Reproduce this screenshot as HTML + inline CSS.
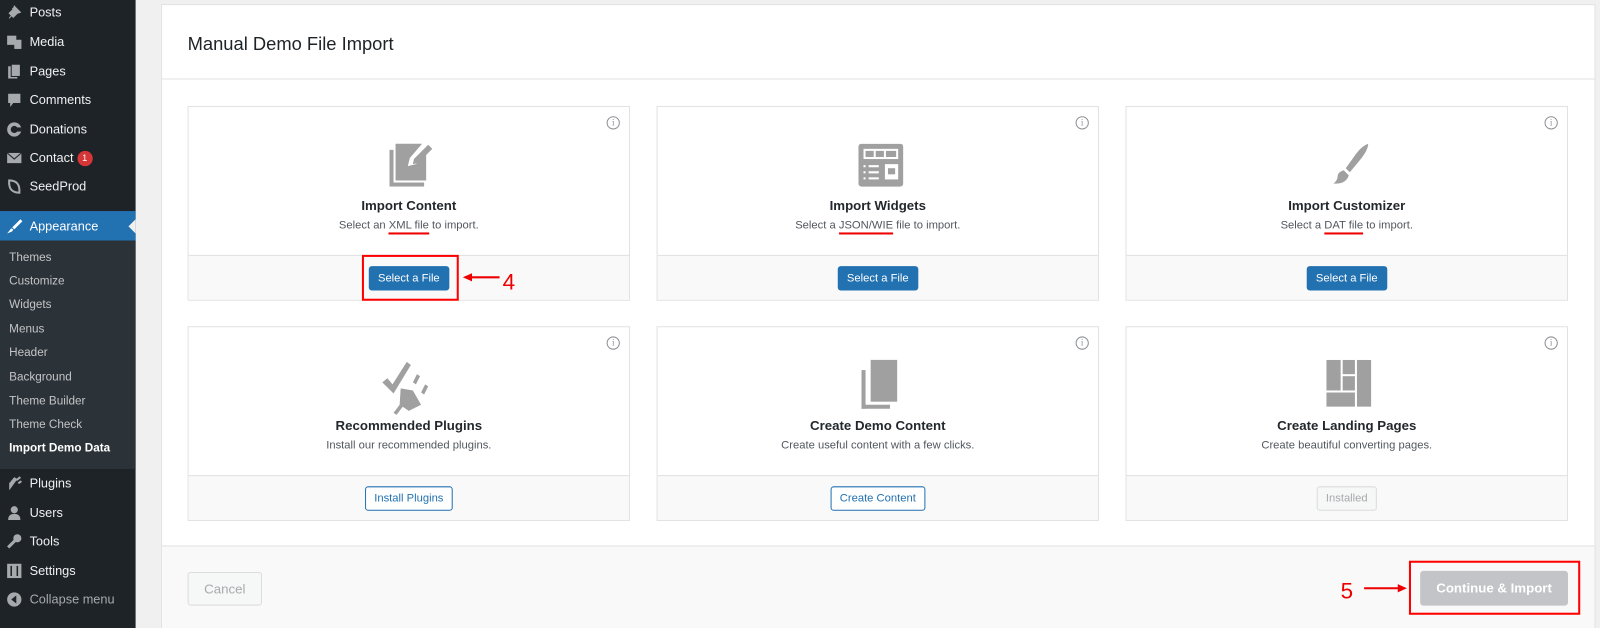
<!DOCTYPE html>
<html><head><meta charset="utf-8"><style>
*{box-sizing:border-box;margin:0;padding:0}
html,body{width:1600px;height:628px;overflow:hidden;background:#f0f0f1;font-family:"Liberation Sans",sans-serif}
#w{position:absolute;left:0;top:0;width:1570px;height:616px;transform:scale(1.0195);transform-origin:0 0}
.sb{position:absolute;left:0;top:0;width:133px;height:616px;background:#1d2327}
.mi{position:absolute;left:0;width:133px;height:28px;color:#f0f0f1;font-size:12.5px;line-height:28px;padding-left:29px}
.mi svg{position:absolute;left:6px;top:6px}
.sub{position:absolute;left:0;top:236px;width:133px;height:224px;background:#2c3338}
.si{position:absolute;left:9px;color:#c3c4c7;font-size:11.5px}
.panel{position:absolute;left:158px;top:4px;width:1407px;height:612px;background:#fff;border:1px solid #e2e2e2}
.title{position:absolute;left:184px;top:33px;font-size:18px;color:#1d2327}
.hl{position:absolute;left:159px;top:77px;width:1405px;height:1px;background:#e2e2e2}
.foot{position:absolute;left:159px;top:535px;width:1405px;height:81px;background:#f9f9f9;border-top:1px solid #e2e2e2}
.card{position:absolute;width:434px;height:191px;border:1px solid #e2e2e2;background:#fff}
.card .f{position:absolute;left:0;bottom:0;width:100%;height:44px;background:#f9f9f9;border-top:1px solid #e2e2e2}
.card h3{position:absolute;left:0;width:100%;text-align:center;top:89px;font-size:13px;font-weight:bold;color:#23282d}
.card p{position:absolute;left:0;width:100%;text-align:center;top:110px;font-size:11px;color:#50575e}
.card .ic{position:absolute;left:197px;top:34px}
.info{position:absolute;right:9px;top:9px;width:13px;height:13px;border:1px solid #8c8f94;border-radius:50%;font-size:9px;line-height:11px;text-align:center;color:#8c8f94;font-family:"Liberation Serif",serif}
.btn{position:absolute;left:50%;transform:translateX(-50%);top:10px;height:24px;padding:0 8px;font-size:11px;line-height:22px;border-radius:3px;white-space:nowrap}
.bp{background:#2271b1;color:#fff;border:1px solid #2271b1}
.bo{background:#fff;color:#2271b1;border:1px solid #2271b1}
.bd{background:#f6f7f7;color:#a7aaad;border:1px solid #dcdcde}
u{text-decoration:none;border-bottom:2px solid #e00;padding-bottom:1px}
.red{position:absolute;border:2px solid #f00}
</style></head><body><div id="w">
<div class="sb">
<div class="mi" style="top:-2px"><svg width="16" height="16"><path d="M3 14l4-5M6 4l5 5M8 2l6 6-3 1-4 4-4-4 4-4z" fill="#a7aaad" stroke="#a7aaad"/></svg>Posts</div>
<div class="mi" style="top:27px"><svg width="16" height="16"><rect x="1" y="2" width="9" height="9" fill="#a7aaad"/><rect x="8" y="6" width="7" height="9" fill="#a7aaad"/></svg>Media</div>
<div class="mi" style="top:56px"><svg width="16" height="16"><rect x="2" y="3" width="9" height="12" fill="#a7aaad"/><rect x="5" y="1" width="9" height="12" fill="#a7aaad" stroke="#1d2327"/></svg>Pages</div>
<div class="mi" style="top:84px"><svg width="16" height="16"><path d="M2 2h12v9H7l-3 4v-4H2z" fill="#a7aaad"/></svg>Comments</div>
<div class="mi" style="top:113px"><svg width="16" height="16"><circle cx="8" cy="8" r="7" fill="#a7aaad"/><circle cx="8" cy="8" r="3.5" fill="#1d2327"/><rect x="8" y="6" width="7" height="4" fill="#1d2327"/></svg>Donations</div>
<div class="mi" style="top:141px"><svg width="16" height="16"><rect x="1" y="3" width="14" height="10" fill="#a7aaad"/><path d="M1 3l7 6 7-6" stroke="#1d2327" fill="none"/></svg>Contact <span style="display:inline-block;width:15px;height:15px;border-radius:50%;background:#d63638;color:#fff;font-size:9px;line-height:15px;text-align:center;vertical-align:middle">1</span></div>
<div class="mi" style="top:169px"><svg width="16" height="16"><path d="M3 2q11 0 10 12Q2 14 3 2z" fill="none" stroke="#a7aaad" stroke-width="2"/></svg>SeedProd</div>
<div style="position:absolute;left:0;top:207px;width:133px;height:29px;background:#2271b1"></div>
<div class="mi" style="top:208px;color:#fff"><svg width="16" height="16"><path d="M14 1L6 9l2 2 8-8zM5 10l-4 5 5-2 1-2z" fill="#fff"/></svg>Appearance</div>
<div style="position:absolute;left:126px;top:215px;border:7px solid transparent;border-right-color:#f0f0f1;border-left:0"></div>
<div class="sub"></div>
<div class="si" style="top:247px">Themes</div>
<div class="si" style="top:270px">Customize</div>
<div class="si" style="top:293px">Widgets</div>
<div class="si" style="top:317px">Menus</div>
<div class="si" style="top:340px">Header</div>
<div class="si" style="top:364px">Background</div>
<div class="si" style="top:388px">Theme Builder</div>
<div class="si" style="top:411px">Theme Check</div>
<div class="si" style="top:434px;color:#fff;font-weight:bold">Import Demo Data</div>
<div class="mi" style="top:460px"><svg width="16" height="16"><path d="M3 15l3-4 5-7-3-2-5 6z" fill="#a7aaad"/><path d="M10 5l4-3M12 8l3-2" stroke="#a7aaad" stroke-width="2"/></svg>Plugins</div>
<div class="mi" style="top:489px"><svg width="16" height="16"><circle cx="8" cy="5" r="3.5" fill="#a7aaad"/><path d="M2 15q0-6 6-6t6 6z" fill="#a7aaad"/></svg>Users</div>
<div class="mi" style="top:517px"><svg width="16" height="16"><path d="M2 14l7-7" stroke="#a7aaad" stroke-width="3"/><circle cx="11" cy="5" r="4" fill="#a7aaad"/></svg>Tools</div>
<div class="mi" style="top:546px"><svg width="16" height="16"><rect x="1" y="1" width="14" height="14" fill="#a7aaad"/><path d="M5 3v10M11 3v10" stroke="#1d2327" stroke-width="1.5"/></svg>Settings</div>
<div class="mi" style="top:574px;color:#a7aaad"><svg width="16" height="16"><circle cx="8" cy="8" r="7" fill="#a7aaad"/><path d="M10 4v8L5 8z" fill="#1d2327"/></svg>Collapse menu</div>
</div>

<div class="panel"></div>
<div class="title">Manual Demo File Import</div>
<div class="hl"></div>
<div class="foot"></div>

<div class="card" style="left:184px;top:104px"><div class="info">i</div>
<svg class="ic" width="44" height="44"><path d="M0 8h4v32h30v4H0z" fill="#a0a0a0"/><path d="M6 2h26l-12 14-2 8 8-2 10-10v26H6z" fill="#a0a0a0"/><path d="M24 17l14-14 4 4-14 14-5 1z" fill="#a0a0a0"/></svg>
<h3>Import Content</h3><p>Select an <u>XML file</u> to import.</p>
<div class="f"><div class="btn bp">Select a File</div></div></div>

<div class="card" style="left:644px;top:104px"><div class="info">i</div>
<svg class="ic" width="44" height="44" style="top:36px"><rect x="0" y="0" width="44" height="42" rx="3" fill="#a0a0a0"/><rect x="5" y="5" width="34" height="10" fill="#fff"/><rect x="7" y="7" width="8" height="6" fill="#a0a0a0"/><rect x="17" y="7" width="8" height="6" fill="#a0a0a0"/><rect x="27" y="7" width="10" height="6" fill="#a0a0a0"/><rect x="26" y="20" width="13" height="15" fill="#fff"/><rect x="29" y="24" width="7" height="6" fill="#a0a0a0"/><path d="M5 22h2M5 28h2M5 34h2M10 22h10M10 28h10M10 34h10" stroke="#fff" stroke-width="2"/></svg>
<h3>Import Widgets</h3><p>Select a <u>JSON/WIE</u> file to import.</p>
<div class="f"><div class="btn bp">Select a File</div></div></div>

<div class="card" style="left:1104px;top:104px"><div class="info">i</div>
<svg class="ic" width="44" height="44"><path d="M40 2q-6 2-12 10L18 26l4 4 10-12q8-10 8-16z" fill="#a0a0a0"/><path d="M16 28l5 5q-3 9-15 8 4-3 4-7t6-6z" fill="#a0a0a0"/></svg>
<h3>Import Customizer</h3><p>Select a <u>DAT file</u> to import.</p>
<div class="f"><div class="btn bp">Select a File</div></div></div>

<div class="card" style="left:184px;top:320px"><div class="info">i</div>
<svg class="ic" width="50" height="56" style="left:190px;top:30px"><path d="M0 24l5-4 5 6L24 4l4 3-17 28z" fill="#a0a0a0"/><path d="M18 30l12 2 8 14-12 6-6-4-6 8-3-2 6-8z" fill="#a0a0a0"/><path d="M30 24l4-8 3 2-4 8zM38 34l4-8 3 2-4 8z" fill="#a0a0a0"/></svg>
<h3>Recommended Plugins</h3><p>Install our recommended plugins.</p>
<div class="f"><div class="btn bo">Install Plugins</div></div></div>

<div class="card" style="left:644px;top:320px"><div class="info">i</div>
<svg class="ic" width="44" height="50" style="left:200px;top:30px"><rect x="0" y="12" width="4" height="38" fill="#a0a0a0"/><rect x="0" y="46" width="28" height="4" fill="#a0a0a0"/><rect x="9" y="2" width="26" height="41" fill="#a0a0a0"/></svg>
<h3>Create Demo Content</h3><p>Create useful content with a few clicks.</p>
<div class="f"><div class="btn bo">Create Content</div></div></div>

<div class="card" style="left:1104px;top:320px"><div class="info">i</div>
<svg class="ic" width="44" height="46" style="left:196px;top:32px"><rect x="0" y="0" width="14" height="30" fill="#a0a0a0"/><rect x="16" y="0" width="12" height="14" fill="#a0a0a0"/><rect x="16" y="16" width="12" height="14" fill="#a0a0a0"/><rect x="30" y="0" width="14" height="46" fill="#a0a0a0"/><rect x="0" y="32" width="28" height="14" fill="#a0a0a0"/></svg>
<h3>Create Landing Pages</h3><p>Create beautiful converting pages.</p>
<div class="f"><div class="btn bd">Installed</div></div></div>

<div class="red" style="left:355px;top:250px;width:95px;height:45px"></div>
<svg style="position:absolute;left:452px;top:262px" width="70" height="30"><path d="M4 10h34" stroke="#e00" stroke-width="2"/><path d="M2 10l9-4v8z" fill="#e00"/><text x="41" y="22" font-size="22" fill="#e00" font-family="Liberation Sans">4</text></svg>

<div style="position:absolute;left:184px;top:561px;width:73px;height:33px;border:1px solid #dcdcde;border-radius:3px;background:#f6f7f7;color:#a7aaad;font-size:13px;line-height:31px;text-align:center">Cancel</div>
<div style="position:absolute;left:1393px;top:560px;width:145px;height:34px;border-radius:3px;background:#c3c4c7;color:#fff;font-size:13px;font-weight:bold;line-height:34px;text-align:center">Continue &amp; Import</div>
<div class="red" style="left:1382px;top:550px;width:168px;height:53px"></div>
<svg style="position:absolute;left:1312px;top:564px" width="70" height="30"><text x="3" y="23" font-size="22" fill="#e00" font-family="Liberation Sans">5</text><path d="M26 13h34" stroke="#e00" stroke-width="2"/><path d="M68 13l-9-4v8z" fill="#e00"/></svg>
</div></body></html>
